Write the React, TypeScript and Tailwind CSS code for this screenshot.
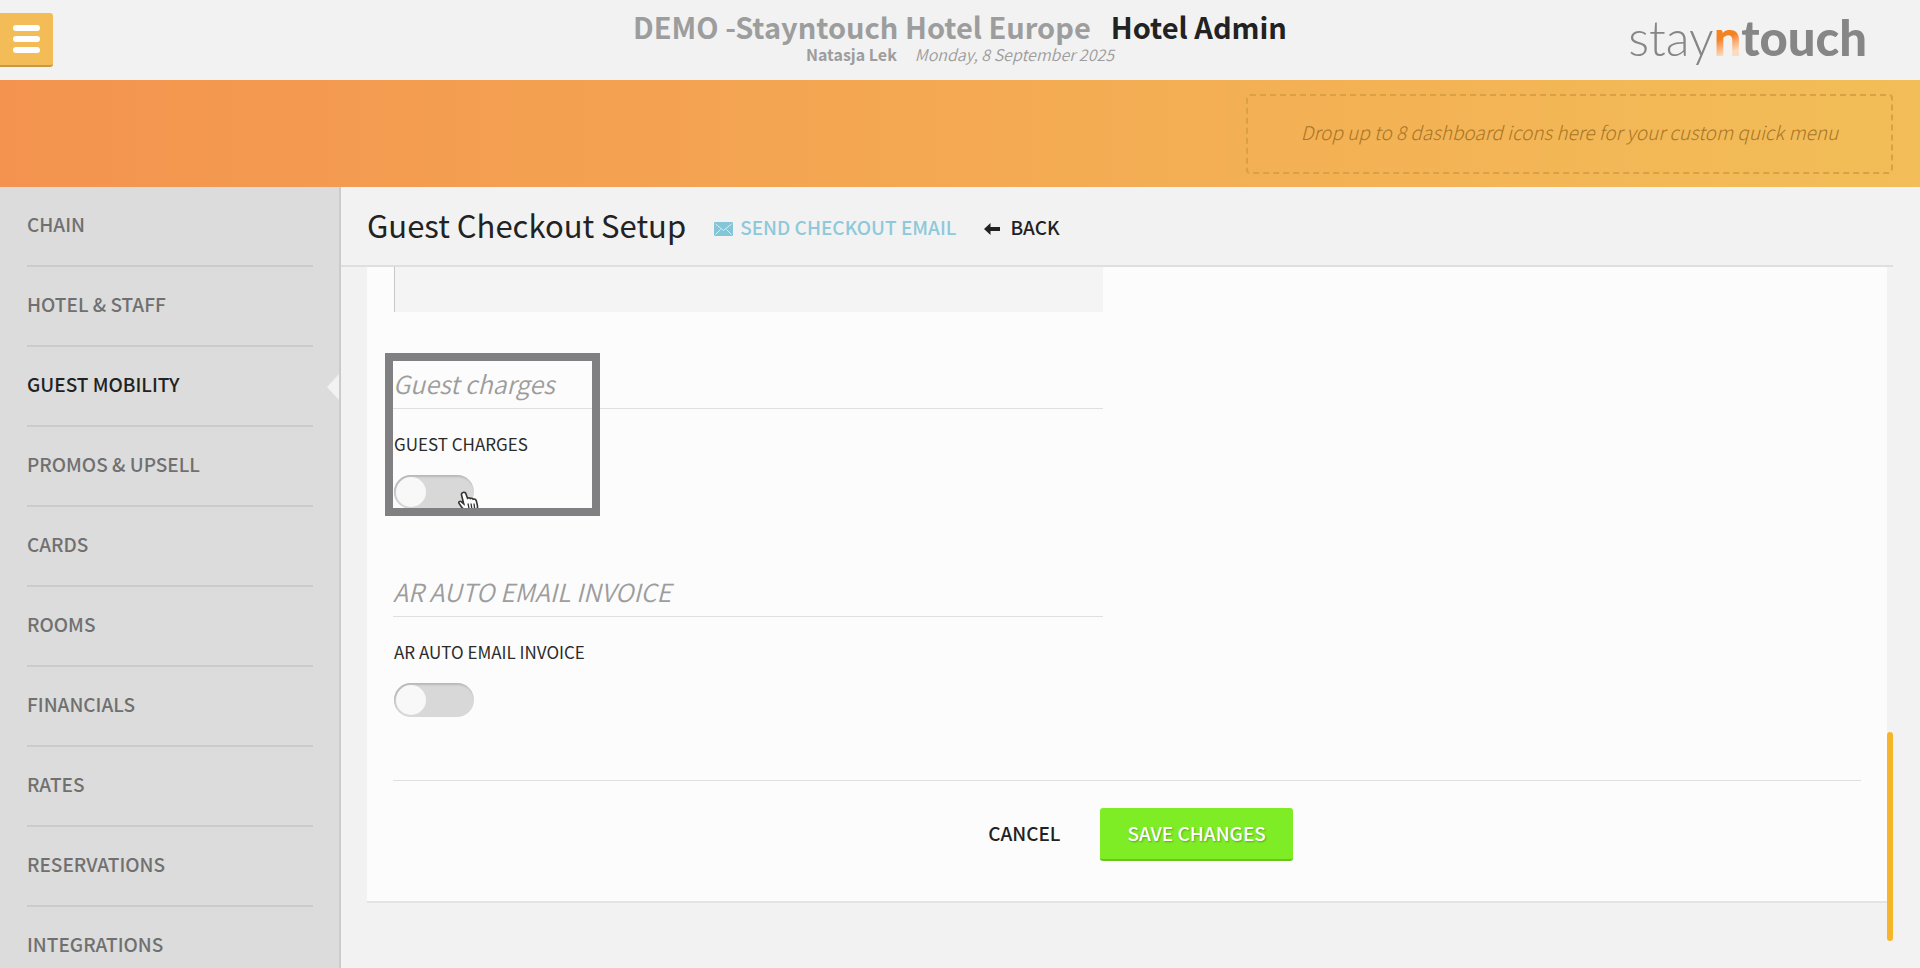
import { useState } from "react";

const menuItems = [
  "CHAIN",
  "HOTEL & STAFF",
  "GUEST MOBILITY",
  "PROMOS & UPSELL",
  "CARDS",
  "ROOMS",
  "FINANCIALS",
  "RATES",
  "RESERVATIONS",
  "INTEGRATIONS",
];

function Logo() {
  return (
    <a href="#home" aria-label="stayntouch" className="font-[Lato,sans-serif] text-[49px] leading-[56px] text-[#868686]">
      <span className="font-light">stay</span>
      <span className="bg-linear-160 from-[#f58220] from-50% to-[#fbdcc0] to-75% bg-clip-text font-black text-transparent">n</span>
      <span className="font-black">touch</span>
    </a>
  );
}

function Header() {
  return (
    <header className="grid h-20 shrink-0 grid-cols-[1fr_auto_1fr] items-start">
      <button
        type="button"
        aria-label="Menu"
        className="mt-[13px] flex h-[54px] w-[53px] flex-col items-center justify-center gap-[5px] rounded-r-[3px] border-b-2 border-[#c69a45] bg-[#f3bc57]"
      >
        <span className="h-[6px] w-[27px] rounded-full bg-white" />
        <span className="h-[6px] w-[27px] rounded-full bg-white" />
        <span className="h-[6px] w-[27px] rounded-full bg-white" />
      </button>
      <div className="pt-[10px] text-center">
        <h1 className="flex gap-5 text-[29px] leading-8 font-bold text-[#9d9d9d]">
          <span>DEMO -Stayntouch Hotel Europe</span>
          <span className="text-[#222]">Hotel Admin</span>
        </h1>
        <p className="flex justify-center gap-[18px] pt-[2px] text-[16px] leading-5 text-[#9d9d9d]">
          <span className="font-bold">Natasja Lek</span>
          <span className="font-[350] italic">Monday, 8 September 2025</span>
        </p>
      </div>
      <div className="flex justify-end pt-[9px] pr-[53px]">
        <Logo />
      </div>
    </header>
  );
}

function Toggle({ id, label }: { id: string; label: string }) {
  const [on, setOn] = useState(false);
  return (
    <div className="flex flex-col items-start pl-px">
      <label htmlFor={id} className="text-[17px] leading-6 text-[#2b2b2b]">
        {label}
      </label>
      <input
        id={id}
        type="checkbox"
        role="switch"
        checked={on}
        onChange={() => setOn(!on)}
        className="mt-[19px] h-[34px] w-20 cursor-pointer appearance-none rounded-full bg-[#d8d8d8] p-[2px] shadow-[inset_1px_2px_2px_#b8b8b8] before:block before:h-[30px] before:w-[30px] before:rounded-full before:bg-[#f8f8f8] checked:bg-[#7eed26] checked:before:ml-auto"
      />
    </div>
  );
}

function Section({ title, id, label }: { title: string; id: string; label: string }) {
  return (
    <section className="w-[710px] max-w-full">
      <h3 className="mb-[23px] border-b border-[#e0e0e0] pb-[10px] text-[25px] leading-[30px] font-[350] text-[#9d9d9d] italic">
        {title}
      </h3>
      <Toggle id={id} label={label} />
    </section>
  );
}

function HandCursor() {
  return (
    <svg viewBox="0 0 21 24" className="absolute top-[130px] left-[65px] h-6 w-[21px]" aria-hidden="true">
      <path
        d="M5 1.5c1.4-.6 2.6.2 3 1.6l1.5 4.2c1-.7 2.2-.5 2.8.3 1-.6 2.300-.3 2.800.6 1.300-.5 2.700.1 3.200 1.500l1.100 4.700c.4 2.300-.2 4-.8 5.600v3H9.500c-1.500-3-4-4.500-6.300-7.500L.9 12.200c-.6-1.300 1-2.500 2.300-1.600l2.500 2.100L3.600 4.300C3.200 3 3.800 1.900 5 1.500z"
        fill="#fff"
        stroke="#333"
        strokeWidth="1.600"
      />
      <path d="M10 12.500l1 5M13 12.500l.8 5M16 12.500l.6 5" fill="none" stroke="#333" strokeWidth="1.300" />
    </svg>
  );
}

export default function App() {
  const [active, setActive] = useState("GUEST MOBILITY");
  return (
    <div className="flex h-screen flex-col overflow-hidden bg-[#f2f2f2] font-['Noto_Sans_CJK_SC',sans-serif] text-[#222]">
      <Header />
      <div className="flex h-[107px] shrink-0 items-center justify-end bg-linear-to-r from-[#f3934f] via-[#f4a952] to-[#f2be58] pr-[27px]">
        <p className="flex h-20 w-[647px] items-center justify-center rounded-sm border-2 border-dashed border-[#d9a046] pb-1 text-[19px] leading-7 font-light text-[#a87526] italic">
          Drop up to 8 dashboard icons here for your custom quick menu
        </p>
      </div>
      <div className="flex min-h-0 flex-1">
        <nav className="w-[341px] shrink-0 overflow-y-auto border-r-2 border-[#cbcbcb] bg-[#dcdcdc] [scrollbar-width:none]">
          <ul>
            {menuItems.map((item) => (
              <li key={item} className="relative pr-[26px] pl-[27px]">
                <a
                  href="#menu"
                  onClick={() => setActive(item)}
                  className={`flex h-20 items-center border-b-2 border-[#cbcbcb] pb-1 text-[19px] leading-7 font-medium ${
                    item === active ? "text-[#222]" : "text-[#707070]"
                  }`}
                >
                  {item}
                </a>
                {item === active && (
                  <span className="absolute top-[27px] right-0 h-[26px] w-3 bg-[#f2f2f2] [clip-path:polygon(100%_0,0_50%,100%_100%)]" />
                )}
              </li>
            ))}
          </ul>
        </nav>
        <main className="relative flex min-w-0 flex-1 flex-col pr-[27px]">
          <div className="flex h-20 shrink-0 items-center border-b-2 border-[#dfdfdf] pb-[2px] pl-[26px]">
            <h2 className="text-[31px] leading-10">Guest Checkout Setup</h2>
            <a href="#send" className="mt-1 ml-7 flex items-center gap-[7px] text-[19px] leading-7 font-medium text-[#8dc9da]">
              <svg viewBox="0 0 19 14" className="mt-1 h-[14px] w-[19px]" aria-hidden="true">
                <rect width="19" height="14" rx="1" fill="#84c5d7" />
                <path d="M1.500 2l8 6.500 8-6.500M1.500 12.500l5-5M17.500 12.500l-5-5" fill="none" stroke="#d9eff5" strokeWidth="1" />
              </svg>
              SEND CHECKOUT EMAIL
            </a>
            <a href="#back" className="mt-1 ml-7 flex items-center gap-[10px] text-[19px] leading-7 font-medium">
              <svg viewBox="0 0 16 12" className="mt-1 h-3 w-4" aria-hidden="true">
                <path d="M0 6L6.500 0v4H16v4H6.500v4z" fill="#222" />
              </svg>
              BACK
            </a>
          </div>
          <form
            onSubmit={(e) => e.preventDefault()}
            className="relative mr-[6px] ml-[26px] border-b-2 border-[#e4e4e4] bg-[#fcfcfc] px-[26px] pb-10"
          >
            <div className="pl-px">
              <textarea
                aria-label="Message"
                className="block h-[45px] w-[709px] max-w-full resize-none border-l border-[#c8c8c8] bg-[#f4f4f4] outline-none"
              />
            </div>
            <div className="mt-[56px] mb-[67px]">
              <Section title="Guest charges" id="guest-charges" label="GUEST CHARGES" />
            </div>
            <Section title="AR AUTO EMAIL INVOICE" id="ar-invoice" label="AR AUTO EMAIL INVOICE" />
            <div className="mt-[63px] flex items-center justify-center gap-10 border-t border-[#e0e0e0] pt-[27px] pl-[27px] text-[19px] leading-7 font-medium">
              <button type="button" className="pb-[3px]">
                CANCEL
              </button>
              <button
                type="submit"
                className="h-[53px] rounded-[3px] border-b-2 border-[#69c61f] bg-[#7eed26] px-[27px] pb-px text-white [text-shadow:1px_1px_2px_rgba(0,0,0,0.300)]"
              >
                SAVE CHANGES
              </button>
            </div>
            <div className="pointer-events-none absolute top-[86px] left-[18px] h-[163px] w-[215px] overflow-hidden border-8 border-[#808082]">
              <HandCursor />
            </div>
          </form>
          <div className="absolute right-[27px] bottom-[27px] h-[209px] w-[6px] rounded-full bg-[#f7b52c]" />
        </main>
      </div>
    </div>
  );
}
